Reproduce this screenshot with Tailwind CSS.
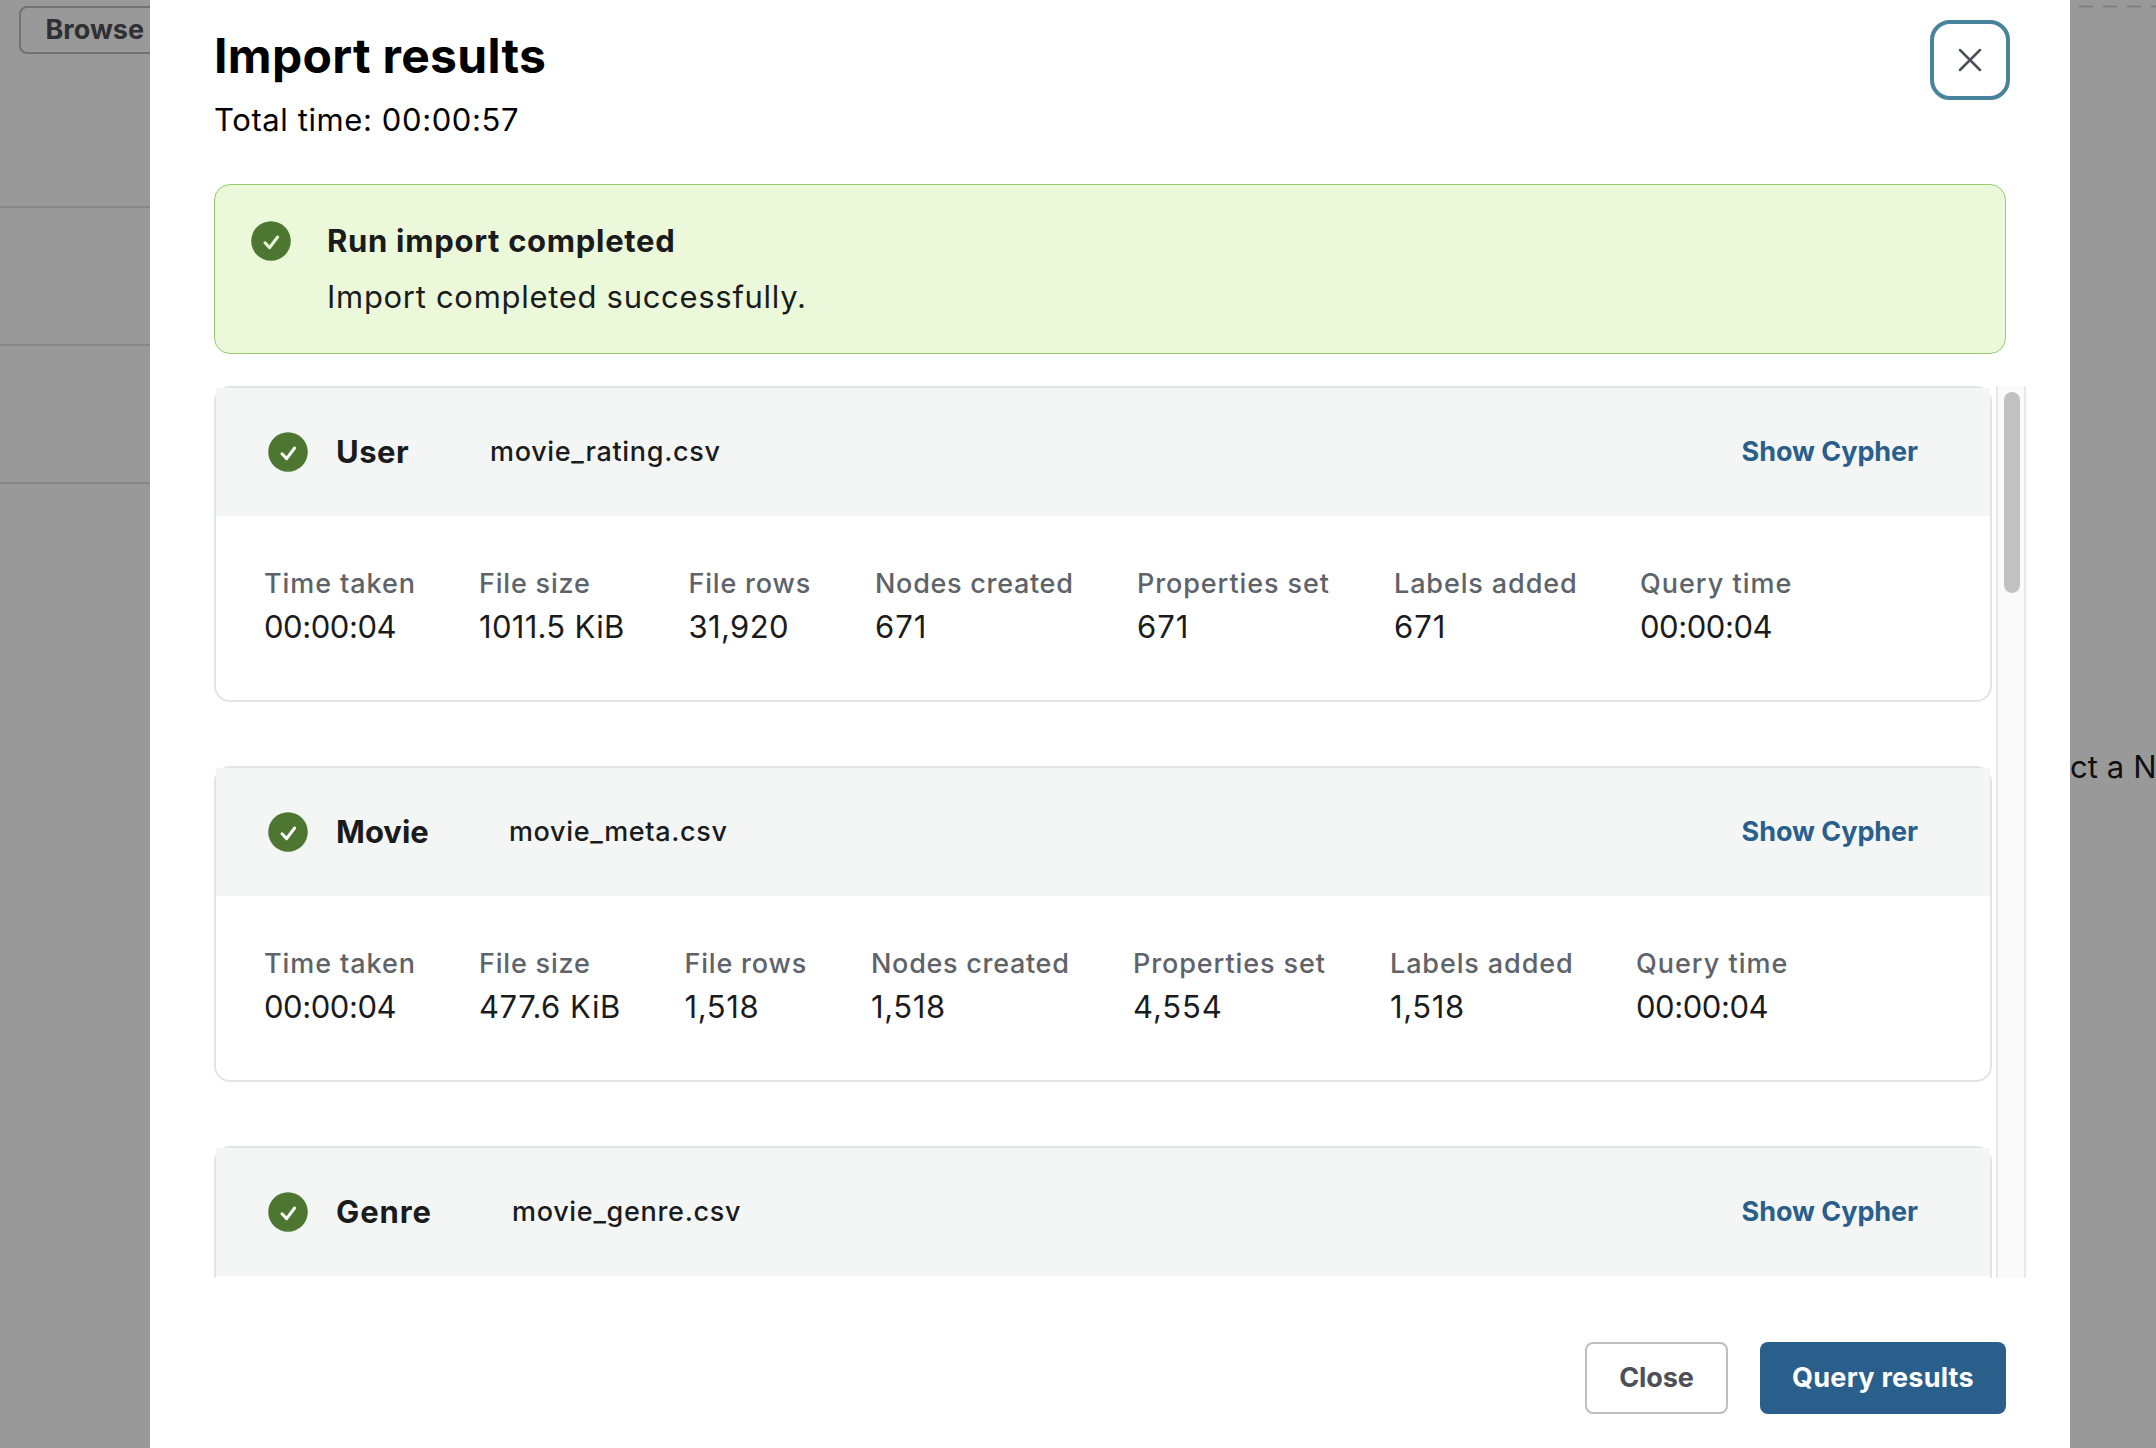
<!DOCTYPE html>
<html lang="en">
<head>
<meta charset="utf-8">
<title>Import results</title>
<script src="https://cdn.jsdelivr.net/npm/@tailwindcss/browser@4"></script>
</head>
<body class="flex h-[1448px] w-[2156px] overflow-hidden bg-[#999999] font-['Inter',sans-serif] text-[#1a1b1d]">
<svg class="hidden">
  <symbol id="check" viewBox="0 0 40 40">
    <circle cx="20" cy="20" r="19.8" fill="#4d7731"/>
    <path d="M14 21.8 18.6 26.6 26.6 16" fill="none" stroke="currentColor" stroke-width="3" stroke-linecap="round" stroke-linejoin="round"/>
  </symbol>
</svg>

<!-- Dimmed page, left -->
<aside class="flex w-[150px] shrink-0 flex-col overflow-hidden">
  <div class="h-[208px] shrink-0 border-b-2 border-[#878787] pt-1.5 pl-[19px]">
    <div class="flex h-12 w-[190px] items-center rounded-lg border-2 border-[#717273] pt-px pl-[24.5px] text-[27px] font-bold text-[#2f3033]">Browse</div>
  </div>
  <div class="h-[138px] shrink-0 border-b-2 border-[#878787]"></div>
  <div class="h-[138px] shrink-0 border-b-2 border-[#878787]"></div>
</aside>

<!-- Dialog -->
<main class="flex w-[1920px] shrink-0 flex-col bg-white pl-16">
  <header class="flex h-[184px] shrink-0 justify-between pr-[60px]">
    <div class="pt-[26px] text-black">
      <h1 class="text-[48px] leading-[60px] font-bold tracking-[0.3px]">Import results</h1>
      <p class="mt-[14px] text-[31px] leading-[40px] tracking-[0.6px]">Total time: 00:00:57</p>
    </div>
    <button class="mt-5 flex size-20 items-center justify-center rounded-[20px] border-4 border-[#49829b]">
      <svg class="size-6" viewBox="0 0 24 24" fill="none" stroke="#4d5157" stroke-width="2.5" stroke-linecap="round"><path d="M2 2 22 22M22 2 2 22"/></svg>
    </button>
  </header>

  <section class="flex h-[170px] w-[1792px] shrink-0 gap-9 rounded-2xl border border-[#98cb70] bg-[#ebf9da] px-9 pt-9">
    <svg class="size-10 text-[#ebf9da]"><use href="#check"/></svg>
    <div class="text-[31px] leading-[40px]">
      <h2 class="font-bold tracking-[0.7px]">Run import completed</h2>
      <p class="mt-4 tracking-[0.7px]">Import completed successfully.</p>
    </div>
  </section>

  <section class="mt-8 flex h-[892px] shrink-0 gap-1 overflow-hidden">
    <div class="flex w-[1778px] shrink-0 flex-col gap-16">

      <article class="h-[316px] shrink-0 rounded-2xl border-2 border-[#e2e4e4]">
        <div class="flex h-32 items-center bg-[#f4f6f6] pr-[72px] pl-[52px]">
          <svg class="size-10 text-white"><use href="#check"/></svg>
          <h3 class="ml-7 w-[74px] text-[31px] font-bold tracking-[0.49px]">User</h3>
          <span class="ml-20 text-[27px] font-medium tracking-[0.68px]">movie_rating.csv</span>
          <a class="ml-auto text-[27px] font-bold tracking-[-0.08px] text-[#2a5f8c]">Show Cypher</a>
        </div>
        <dl class="flex gap-16 pt-12 pl-12 text-[31px] leading-[40px] whitespace-nowrap">
          <div class="w-[151px]"><dt class="mb-[3px] text-[27px] font-medium tracking-[0.92px] text-[#5e636a]">Time taken</dt><dd class="tracking-[-0.45px]">00:00:04</dd></div>
          <div class="w-[145.5px]"><dt class="mb-[3px] text-[27px] font-medium tracking-[0.8px] text-[#5e636a]">File size</dt><dd class="tracking-[0.3px]">1011.5 KiB</dd></div>
          <div class="w-[122.5px]"><dt class="mb-[3px] text-[27px] font-medium tracking-[0.8px] text-[#5e636a]">File rows</dt><dd class="tracking-[0.38px]">31,920</dd></div>
          <div class="w-[198px]"><dt class="mb-[3px] text-[27px] font-medium tracking-[0.7px] text-[#5e636a]">Nodes created</dt><dd class="tracking-[1px]">671</dd></div>
          <div class="w-[193px]"><dt class="mb-[3px] text-[27px] font-medium tracking-[0.9px] text-[#5e636a]">Properties set</dt><dd class="tracking-[1px]">671</dd></div>
          <div class="w-[182px]"><dt class="mb-[3px] text-[27px] font-medium tracking-[0.88px] text-[#5e636a]">Labels added</dt><dd class="tracking-[1px]">671</dd></div>
          <div><dt class="mb-[3px] text-[27px] font-medium tracking-[1px] text-[#5e636a]">Query time</dt><dd class="tracking-[-0.45px]">00:00:04</dd></div>
        </dl>
      </article>

      <article class="h-[316px] shrink-0 rounded-2xl border-2 border-[#e2e4e4]">
        <div class="flex h-32 items-center bg-[#f4f6f6] pr-[72px] pl-[52px]">
          <svg class="size-10 text-white"><use href="#check"/></svg>
          <h3 class="ml-7 w-[93px] text-[31px] font-bold">Movie</h3>
          <span class="ml-20 text-[27px] font-medium tracking-[0.64px]">movie_meta.csv</span>
          <a class="ml-auto text-[27px] font-bold tracking-[-0.08px] text-[#2a5f8c]">Show Cypher</a>
        </div>
        <dl class="flex gap-16 pt-12 pl-12 text-[31px] leading-[40px] whitespace-nowrap">
          <div class="w-[151px]"><dt class="mb-[3px] text-[27px] font-medium tracking-[0.92px] text-[#5e636a]">Time taken</dt><dd class="tracking-[-0.45px]">00:00:04</dd></div>
          <div class="w-[141.5px]"><dt class="mb-[3px] text-[27px] font-medium tracking-[0.8px] text-[#5e636a]">File size</dt><dd class="tracking-[0.53px]">477.6 KiB</dd></div>
          <div class="w-[122.5px]"><dt class="mb-[3px] text-[27px] font-medium tracking-[0.8px] text-[#5e636a]">File rows</dt><dd class="tracking-[0.61px]">1,518</dd></div>
          <div class="w-[198px]"><dt class="mb-[3px] text-[27px] font-medium tracking-[0.7px] text-[#5e636a]">Nodes created</dt><dd class="tracking-[0.61px]">1,518</dd></div>
          <div class="w-[193px]"><dt class="mb-[3px] text-[27px] font-medium tracking-[0.9px] text-[#5e636a]">Properties set</dt><dd class="tracking-[0.9px]">4,554</dd></div>
          <div class="w-[182px]"><dt class="mb-[3px] text-[27px] font-medium tracking-[0.88px] text-[#5e636a]">Labels added</dt><dd class="tracking-[0.61px]">1,518</dd></div>
          <div><dt class="mb-[3px] text-[27px] font-medium tracking-[1px] text-[#5e636a]">Query time</dt><dd class="tracking-[-0.45px]">00:00:04</dd></div>
        </dl>
      </article>

      <article class="h-[316px] shrink-0 rounded-2xl border-2 border-[#e2e4e4]">
        <div class="flex h-32 items-center bg-[#f4f6f6] pr-[72px] pl-[52px]">
          <svg class="size-10 text-white"><use href="#check"/></svg>
          <h3 class="ml-7 w-24 text-[31px] font-bold tracking-[0.9px]">Genre</h3>
          <span class="ml-20 text-[27px] font-medium tracking-[0.69px]">movie_genre.csv</span>
          <a class="ml-auto text-[27px] font-bold tracking-[-0.08px] text-[#2a5f8c]">Show Cypher</a>
        </div>
      </article>
    </div>

    <!-- Scrollbar -->
    <div class="flex w-[30px] justify-center border-x-2 border-[#e8e8e8] bg-[#fafafa] pt-1.5 pl-0.5">
      <div class="h-[201px] w-4 rounded-full bg-[#c1c1c1]"></div>
    </div>
  </section>

  <footer class="mt-16 flex justify-end gap-8 pr-16 text-[27px] font-bold">
    <button class="h-[72px] w-[143px] rounded-lg border-2 border-[#bbbec3] tracking-[-0.12px] text-[#4d5157]">Close</button>
    <button class="h-[72px] w-[246px] rounded-lg bg-[#2a5f8c] tracking-[0.23px] text-white">Query results</button>
  </footer>
</main>

<!-- Dimmed page, right -->
<aside class="w-[86px] shrink-0 overflow-hidden">
  <svg class="block h-[747px] w-[86px]" fill="none" stroke="#797c7e" stroke-width="1.5"><path d="M8.5 6.5H100" stroke-dasharray="15 9"/></svg>
  <p class="text-[31px] leading-[40px] tracking-[0.1px] whitespace-nowrap text-[#0f1011]">ct a N</p>
</aside>
</body>
</html>
